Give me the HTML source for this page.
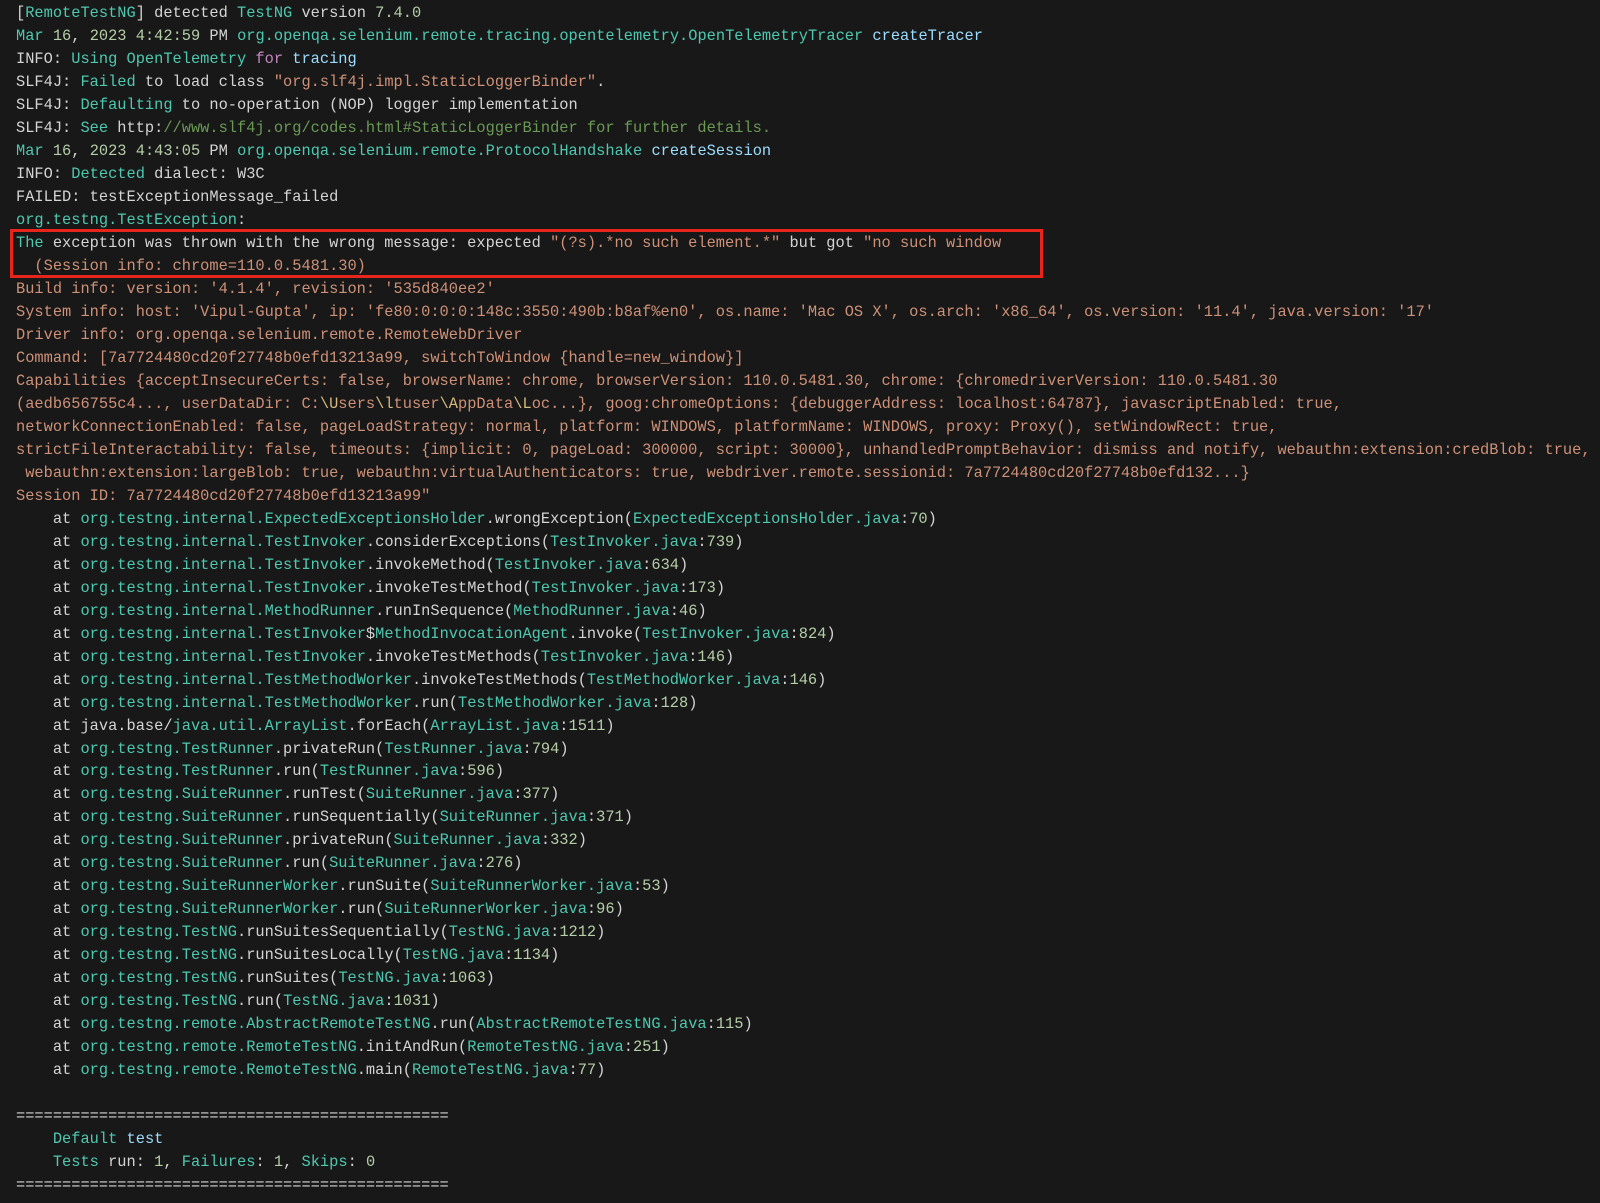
<!DOCTYPE html>
<html><head><meta charset="utf-8"><style>
html,body{margin:0;padding:0;background:#181818;}
body{width:1600px;height:1203px;overflow:hidden;position:relative;}
pre{margin:0;position:absolute;left:16px;top:2px;font-family:"Liberation Mono",monospace;font-size:15.35px;line-height:22.98px;color:#d4d4d4;white-space:pre;}
.t{color:#4ec9b0}.n{color:#b5cea8}.s{color:#ce9178}.b{color:#9cdcfe}.p{color:#c586c0}.g{color:#6a9955}.y{color:#d7ba7d}
.box{position:absolute;left:10px;top:229px;width:1027px;height:43px;border:3px solid #e8251a;}
</style></head><body>
<div class="box"></div>
<pre>[<span class="t">RemoteTestNG</span>] detected <span class="t">TestNG</span> version <span class="n">7.4.0</span>
<span class="t">Mar</span> <span class="n">16</span>, <span class="n">2023</span> <span class="n">4:42:59</span> PM <span class="t">org.openqa.selenium.remote.tracing.opentelemetry.OpenTelemetryTracer</span> <span class="b">createTracer</span>
INFO: <span class="t">Using OpenTelemetry</span> <span class="p">for</span> <span class="b">tracing</span>
SLF4J: <span class="t">Failed</span> to load class <span class="s">"org.slf4j.impl.StaticLoggerBinder"</span>.
SLF4J: <span class="t">Defaulting</span> to no-operation (NOP) logger implementation
SLF4J: <span class="t">See</span> http:<span class="g">//www.slf4j.org/codes.html#StaticLoggerBinder for further details.</span>
<span class="t">Mar</span> <span class="n">16</span>, <span class="n">2023</span> <span class="n">4:43:05</span> PM <span class="t">org.openqa.selenium.remote.ProtocolHandshake</span> <span class="b">createSession</span>
INFO: <span class="t">Detected</span> dialect: W3C
FAILED: testExceptionMessage_failed
<span class="t">org.testng.TestException</span>:
<span class="t">The</span> exception was thrown with the wrong message: expected <span class="s">"(?s).*no such element.*"</span> but got <span class="s">"no such window</span>
<span class="s">  (Session info: chrome=110.0.5481.30)
Build info: version: '4.1.4', revision: '535d840ee2'
System info: host: 'Vipul-Gupta', ip: 'fe80:0:0:0:148c:3550:490b:b8af%en0', os.name: 'Mac OS X', os.arch: 'x86_64', os.version: '11.4', java.version: '17'
Driver info: org.openqa.selenium.remote.RemoteWebDriver
Command: [7a7724480cd20f27748b0efd13213a99, switchToWindow {handle=new_window}]
Capabilities {acceptInsecureCerts: false, browserName: chrome, browserVersion: 110.0.5481.30, chrome: {chromedriverVersion: 110.0.5481.30
(aedb656755c4..., userDataDir: C:<span class="y">\U</span>sers<span class="y">\l</span>tuser<span class="y">\A</span>ppData<span class="y">\L</span>oc...}, goog:chromeOptions: {debuggerAddress: localhost:64787}, javascriptEnabled: true,
networkConnectionEnabled: false, pageLoadStrategy: normal, platform: WINDOWS, platformName: WINDOWS, proxy: Proxy(), setWindowRect: true,
strictFileInteractability: false, timeouts: {implicit: 0, pageLoad: 300000, script: 30000}, unhandledPromptBehavior: dismiss and notify, webauthn:extension:credBlob: true,
 webauthn:extension:largeBlob: true, webauthn:virtualAuthenticators: true, webdriver.remote.sessionid: 7a7724480cd20f27748b0efd132...}
Session ID: 7a7724480cd20f27748b0efd13213a99"</span>
    at <span class="t">org.testng.internal.ExpectedExceptionsHolder</span>.wrongException(<span class="t">ExpectedExceptionsHolder.java</span>:<span class="n">70</span>)
    at <span class="t">org.testng.internal.TestInvoker</span>.considerExceptions(<span class="t">TestInvoker.java</span>:<span class="n">739</span>)
    at <span class="t">org.testng.internal.TestInvoker</span>.invokeMethod(<span class="t">TestInvoker.java</span>:<span class="n">634</span>)
    at <span class="t">org.testng.internal.TestInvoker</span>.invokeTestMethod(<span class="t">TestInvoker.java</span>:<span class="n">173</span>)
    at <span class="t">org.testng.internal.MethodRunner</span>.runInSequence(<span class="t">MethodRunner.java</span>:<span class="n">46</span>)
    at <span class="t">org.testng.internal.TestInvoker</span>$<span class="t">MethodInvocationAgent</span>.invoke(<span class="t">TestInvoker.java</span>:<span class="n">824</span>)
    at <span class="t">org.testng.internal.TestInvoker</span>.invokeTestMethods(<span class="t">TestInvoker.java</span>:<span class="n">146</span>)
    at <span class="t">org.testng.internal.TestMethodWorker</span>.invokeTestMethods(<span class="t">TestMethodWorker.java</span>:<span class="n">146</span>)
    at <span class="t">org.testng.internal.TestMethodWorker</span>.run(<span class="t">TestMethodWorker.java</span>:<span class="n">128</span>)
    at java.base/<span class="t">java.util.ArrayList</span>.forEach(<span class="t">ArrayList.java</span>:<span class="n">1511</span>)
    at <span class="t">org.testng.TestRunner</span>.privateRun(<span class="t">TestRunner.java</span>:<span class="n">794</span>)
    at <span class="t">org.testng.TestRunner</span>.run(<span class="t">TestRunner.java</span>:<span class="n">596</span>)
    at <span class="t">org.testng.SuiteRunner</span>.runTest(<span class="t">SuiteRunner.java</span>:<span class="n">377</span>)
    at <span class="t">org.testng.SuiteRunner</span>.runSequentially(<span class="t">SuiteRunner.java</span>:<span class="n">371</span>)
    at <span class="t">org.testng.SuiteRunner</span>.privateRun(<span class="t">SuiteRunner.java</span>:<span class="n">332</span>)
    at <span class="t">org.testng.SuiteRunner</span>.run(<span class="t">SuiteRunner.java</span>:<span class="n">276</span>)
    at <span class="t">org.testng.SuiteRunnerWorker</span>.runSuite(<span class="t">SuiteRunnerWorker.java</span>:<span class="n">53</span>)
    at <span class="t">org.testng.SuiteRunnerWorker</span>.run(<span class="t">SuiteRunnerWorker.java</span>:<span class="n">96</span>)
    at <span class="t">org.testng.TestNG</span>.runSuitesSequentially(<span class="t">TestNG.java</span>:<span class="n">1212</span>)
    at <span class="t">org.testng.TestNG</span>.runSuitesLocally(<span class="t">TestNG.java</span>:<span class="n">1134</span>)
    at <span class="t">org.testng.TestNG</span>.runSuites(<span class="t">TestNG.java</span>:<span class="n">1063</span>)
    at <span class="t">org.testng.TestNG</span>.run(<span class="t">TestNG.java</span>:<span class="n">1031</span>)
    at <span class="t">org.testng.remote.AbstractRemoteTestNG</span>.run(<span class="t">AbstractRemoteTestNG.java</span>:<span class="n">115</span>)
    at <span class="t">org.testng.remote.RemoteTestNG</span>.initAndRun(<span class="t">RemoteTestNG.java</span>:<span class="n">251</span>)
    at <span class="t">org.testng.remote.RemoteTestNG</span>.main(<span class="t">RemoteTestNG.java</span>:<span class="n">77</span>)

===============================================
    <span class="t">Default</span> <span class="b">test</span>
    <span class="t">Tests</span> run: <span class="n">1</span>, <span class="t">Failures</span>: <span class="n">1</span>, <span class="t">Skips</span>: <span class="n">0</span>
===============================================
</pre>
</body></html>
